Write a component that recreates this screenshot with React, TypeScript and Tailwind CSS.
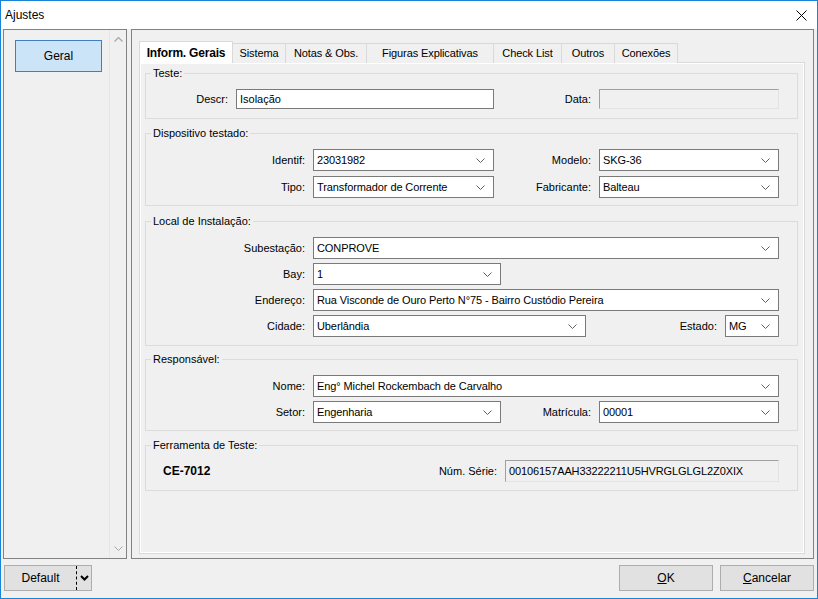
import React from 'react';

const font = "font-['Liberation_Sans',Arial,sans-serif]";

function Chevron({ color = '#606060' }: { color?: string }) {
  return (
    <svg width="9" height="5" viewBox="0 0 9 5" className="shrink-0">
      <path d="M0.5 0.5 L4.5 4.5 L8.5 0.5" fill="none" stroke={color} strokeWidth="1" />
    </svg>
  );
}

function Combo({ value, w }: { value: string; w: string }) {
  return (
    <div className={`flex h-[22px] items-center justify-between border border-[#7a7a7a] bg-white pl-[3px] pr-[8px] ${w}`}>
      <span className="whitespace-nowrap tracking-[-0.1px]">{value}</span>
      <Chevron />
    </div>
  );
}

function Label({ text, w }: { text: string; w: string }) {
  return <span className={`shrink-0 pr-[8px] text-right whitespace-nowrap ${w}`}>{text}</span>;
}

function Group({ title, className, children }: { title: string; className: string; children: React.ReactNode }) {
  return (
    <div className={`relative border border-[#dcdcdc] ${className}`}>
      <span className="absolute -top-[8px] left-[5px] bg-[#f0f0f0] px-[2px] leading-[14px]">{title}</span>
      {children}
    </div>
  );
}

const tabs = [
  { name: 'Sistema', w: 'w-[53px]' },
  { name: 'Notas & Obs.', w: 'w-[81px]' },
  { name: 'Figuras Explicativas', w: 'w-[127px]' },
  { name: 'Check List', w: 'w-[68px]' },
  { name: 'Outros', w: 'w-[53px]' },
  { name: 'Conexões', w: 'w-[63px]' },
];

export default function App() {
  return (
    <div className={`${font} flex h-[599px] w-[818px] flex-col border border-[#1883d7] bg-[#f0f0f0] text-[11px] text-black`}>
      {/* Title bar */}
      <div className="flex h-[28px] items-center justify-between bg-white pl-[4px] pr-[10px]">
        <span className="text-[12px]">Ajustes</span>
        <svg width="11" height="11" viewBox="0 0 11 11">
          <path d="M0.5 0.5 L10.5 10.5 M10.5 0.5 L0.5 10.5" stroke="#000" strokeWidth="1" />
        </svg>
      </div>

      {/* Body */}
      <div className="flex h-[530px] gap-[4px] pl-[2px] pr-[3px]">
        {/* Left list */}
        <div className="flex w-[124px] border border-[#828282]">
          <div className="flex-1 pl-[11px] pt-[10px]">
            <div className="flex h-[32px] w-[87px] items-center justify-center border border-[#3f7fbf] bg-[#cce4f7] text-[12px]">
              Geral
            </div>
          </div>
          <div className="flex w-[17px] flex-col items-center justify-between border-l border-[#e6e6e6] pb-[7px] pt-[7px]">
            <svg width="9" height="5" viewBox="0 0 9 5" className="rotate-180">
              <path d="M0.5 0.5 L4.5 4.5 L8.5 0.5" fill="none" stroke="#a6a6a6" strokeWidth="1.2" />
            </svg>
            <Chevron color="#a6a6a6" />
          </div>
        </div>

        {/* Right panel */}
        <div className="flex flex-1 flex-col border border-[#828282] pb-[4px] pl-[7px] pr-[8px] pt-[11px]">
          {/* Tab strip */}
          <div className="relative z-10 -mb-[1px] flex h-[22px] items-end">
            <div className="flex h-[22px] w-[94px] items-center justify-center border border-b-0 border-[#d9d9d9] bg-white text-[12px] font-bold tracking-[-0.2px]">
              Inform. Gerais
            </div>
            {tabs.map((t) => (
              <div
                key={t.name}
                className={`flex h-[20px] items-center justify-center border border-l-0 border-b-0 border-[#d9d9d9] bg-[#f0f0f0] tracking-[-0.1px] ${t.w}`}
              >
                {t.name}
              </div>
            ))}
          </div>

          {/* Tab page */}
          <div className="flex flex-1 flex-col border border-[#d9d9d9] pl-[5px] pr-[6px] pt-[10px] shadow-[inset_1px_1px_0_#ffffff,inset_-1px_-1px_0_#ffffff]">
            <Group title="Teste:" className="pb-[9px] pt-[15px]">
              <div className="flex items-center">
                <Label text="Descr:" w="w-[90px]" />
                <div className="flex h-[20px] w-[258px] items-center border border-[#7a7a7a] bg-white pl-[3px]">Isolação</div>
                <Label text="Data:" w="w-[105px]" />
                <div className="h-[20px] w-[180px] border border-b-[#e3e3e3] border-l-[#a0a0a0] border-r-[#e3e3e3] border-t-[#a0a0a0] bg-[#f0f0f0]" />
              </div>
            </Group>

            <Group title="Dispositivo testado:" className="mt-[14px] flex flex-col gap-[5px] pb-[7px] pt-[15px]">
              <div className="flex items-center">
                <Label text="Identif:" w="w-[167px]" />
                <Combo value="23031982" w="w-[181px]" />
                <Label text="Modelo:" w="w-[105px]" />
                <Combo value="SKG-36" w="w-[180px]" />
              </div>
              <div className="flex items-center">
                <Label text="Tipo:" w="w-[167px]" />
                <Combo value="Transformador de Corrente" w="w-[181px]" />
                <Label text="Fabricante:" w="w-[105px]" />
                <Combo value="Balteau" w="w-[180px]" />
              </div>
            </Group>

            <Group title="Local de Instalação:" className="mt-[15px] flex flex-col gap-[4px] pb-[8px] pt-[15px]">
              <div className="flex items-center">
                <Label text="Subestação:" w="w-[167px]" />
                <Combo value="CONPROVE" w="w-[466px]" />
              </div>
              <div className="flex items-center">
                <Label text="Bay:" w="w-[167px]" />
                <Combo value="1" w="w-[188px]" />
              </div>
              <div className="flex items-center">
                <Label text="Endereço:" w="w-[167px]" />
                <Combo value="Rua Visconde de Ouro Perto N°75 - Bairro Custódio Pereira" w="w-[466px]" />
              </div>
              <div className="flex items-center">
                <Label text="Cidade:" w="w-[167px]" />
                <Combo value="Uberlândia" w="w-[273px]" />
                <Label text="Estado:" w="w-[139px]" />
                <Combo value="MG" w="w-[54px]" />
              </div>
            </Group>

            <Group title="Responsável:" className="mt-[13px] flex flex-col gap-[4px] pb-[7px] pt-[15px]">
              <div className="flex items-center">
                <Label text="Nome:" w="w-[167px]" />
                <Combo value="Eng° Michel Rockembach de Carvalho" w="w-[466px]" />
              </div>
              <div className="flex items-center">
                <Label text="Setor:" w="w-[167px]" />
                <Combo value="Engenharia" w="w-[188px]" />
                <Label text="Matrícula:" w="w-[98px]" />
                <Combo value="00001" w="w-[180px]" />
              </div>
            </Group>

            <Group title="Ferramenta de Teste:" className="mt-[14px] pb-[8px] pt-[14px]">
              <div className="flex items-center">
                <div className="flex w-[359px] items-center justify-between pl-[17px] pr-[8px]">
                  <span className="text-[12px] font-bold">CE-7012</span>
                  <span>Núm. Série:</span>
                </div>
                <div className="flex h-[22px] w-[274px] items-center border border-b-[#e3e3e3] border-l-[#a0a0a0] border-r-[#e3e3e3] border-t-[#a0a0a0] bg-[#f0f0f0] pl-[3px] tracking-[-0.1px]">
                  00106157AAH33222211U5HVRGLGLGL2Z0XIX
                </div>
              </div>
            </Group>
          </div>
        </div>
      </div>

      {/* Bottom buttons */}
      <div className="flex flex-1 items-start justify-between pl-[3px] pr-[3px] pt-[6px] text-[12px]">
        <div className="flex h-[26px] w-[88px] items-center border border-[#adadad] bg-[#e1e1e1]">
          <span className="flex-1 text-center">Default</span>
          <div className="flex h-full w-[15px] items-center justify-center border-l border-dashed border-black">
            <svg width="9" height="6" viewBox="0 0 9 6">
              <path d="M1 1 L4.5 4.5 L8 1" fill="none" stroke="#000" strokeWidth="2" />
            </svg>
          </div>
        </div>
        <div className="flex gap-[7px]">
          <div className="flex h-[26px] w-[94px] items-center justify-center border border-[#adadad] bg-[#e1e1e1]">
            <span><span className="underline">O</span>K</span>
          </div>
          <div className="flex h-[26px] w-[94px] items-center justify-center border border-[#adadad] bg-[#e1e1e1]">
            <span><span className="underline">C</span>ancelar</span>
          </div>
        </div>
      </div>
    </div>
  );
}
